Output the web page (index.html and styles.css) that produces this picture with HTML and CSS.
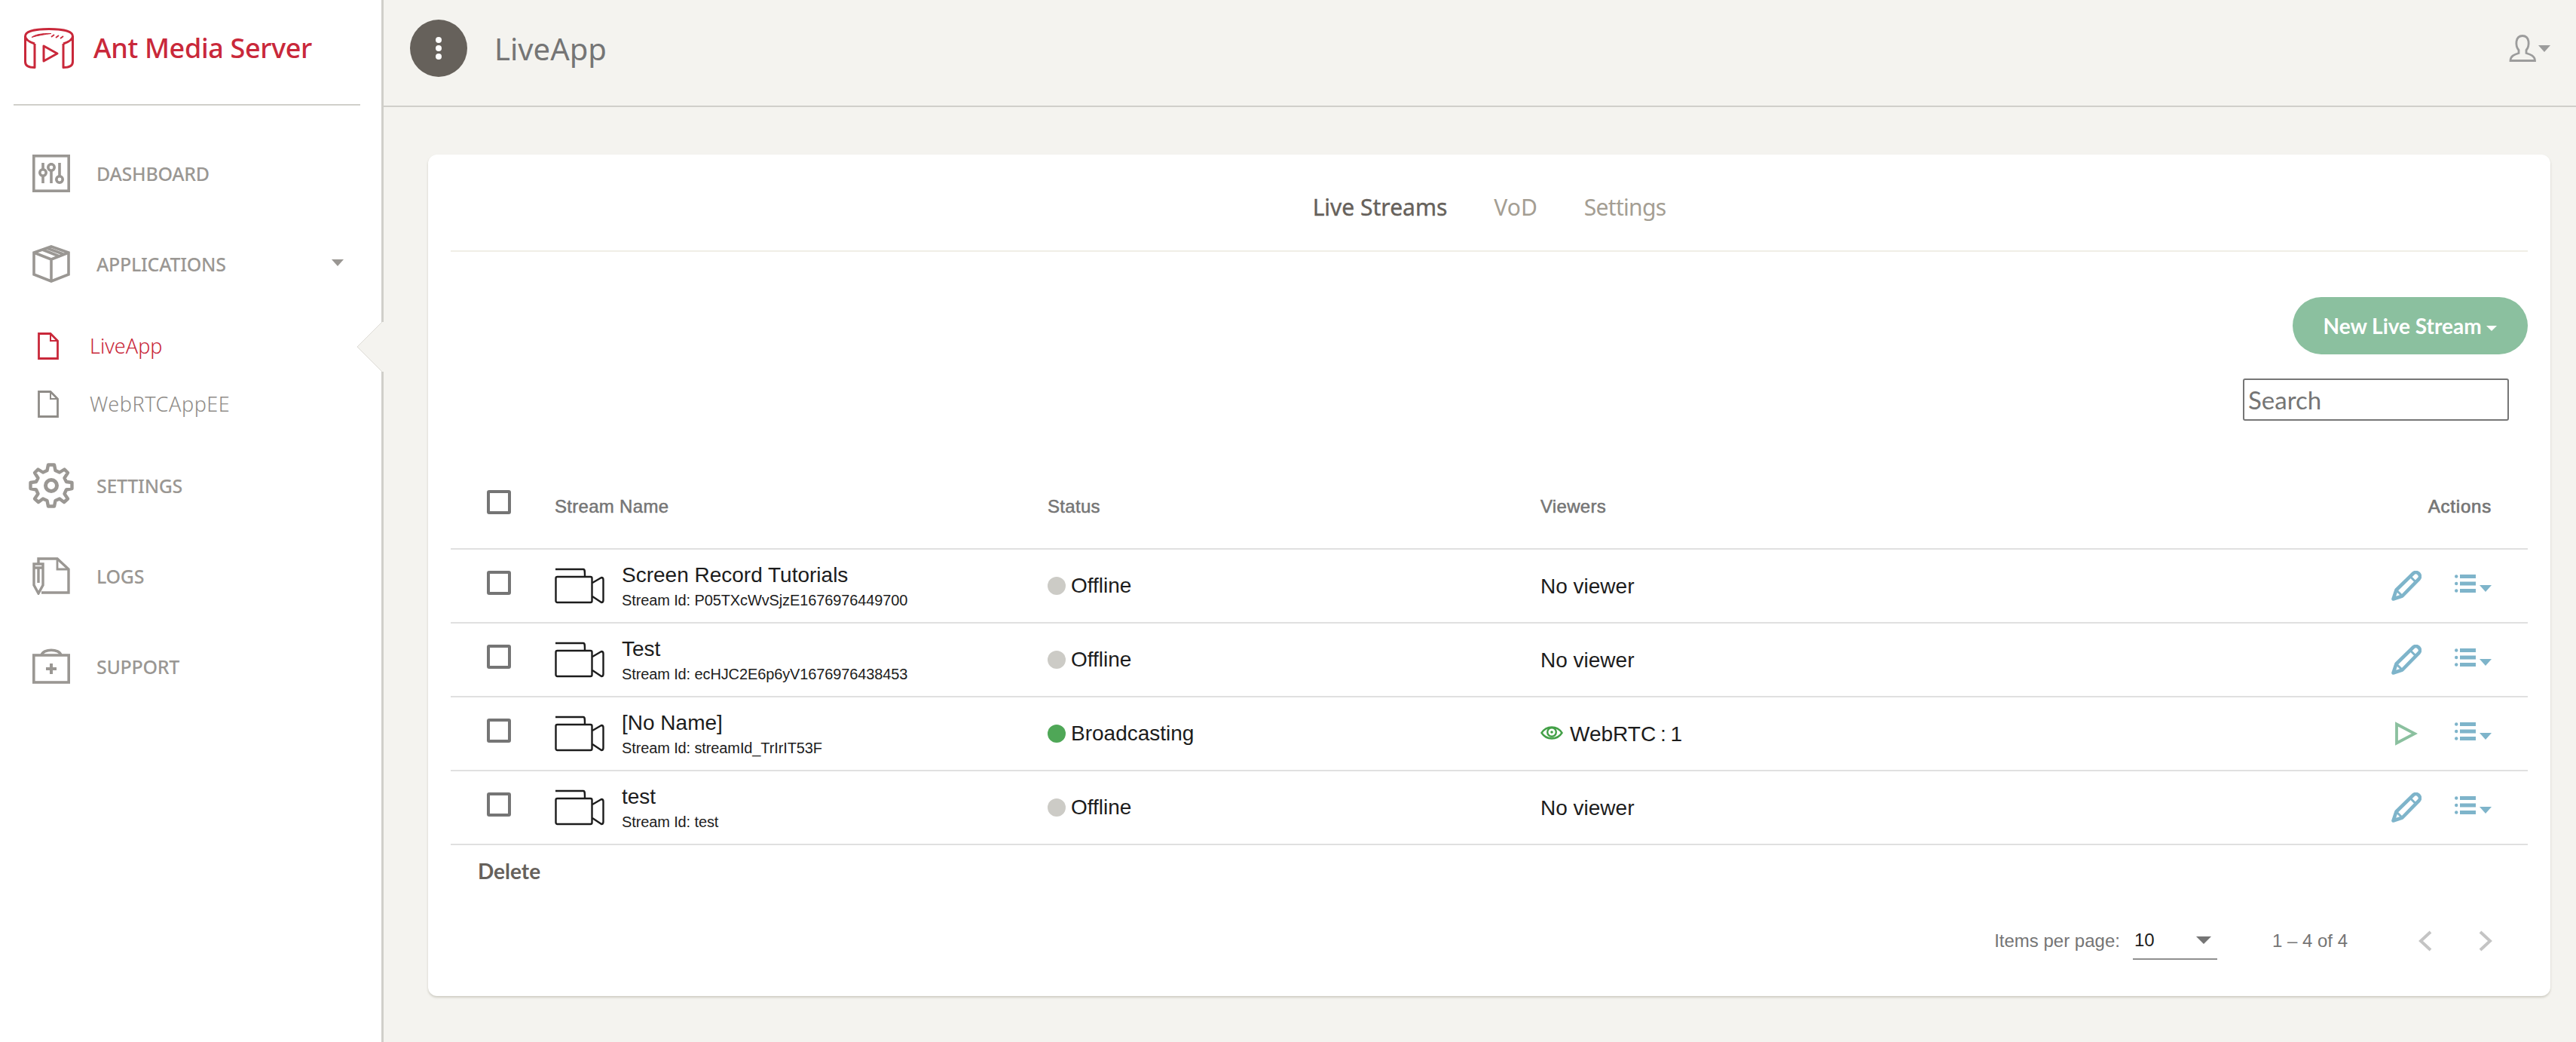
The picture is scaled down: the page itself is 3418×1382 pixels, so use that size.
FILE: index.html
```html
<!DOCTYPE html>
<html lang="en">
<head>
    <meta charset="UTF-8">
    <title>Ant Media Server</title>
    <link rel="stylesheet" href="styles.css">
</head>
<body>
    <div class="app">
        <aside class="sidebar">
            <div class="brand">
                <svg class="brand-logo" viewBox="0 0 66 54" fill="none" stroke="#c9283a" stroke-width="3" stroke-linejoin="round">
                    <path d="M14 21V52.500C6 52.500 1.500 50 1.500 45V11C1.500 4 16 1.500 33 1.500S64.500 4 64.500 11V45C64.500 50 60 52.500 52 52.500V21"/>
                    <path d="M1.500 11C1.500 16 8 19 14 21M64.500 11C64.500 16 58 19 52 21"/>
                    <path d="M10 12.500C14 9 24 7 36 7.500C28 8.500 18 10 10 12.500Z" fill="#c9283a" stroke-width="1"/>
                    <path d="M36 12l4-3M42 13l4-3M48 14l4-3" stroke-width="1.800"/>
                    <path d="M26 24V44L44 34Z"/>
                </svg>
                <span class="brand-name">Ant Media Server</span>
            </div>
            <nav class="nav">
                <a class="nav-item">
                    <svg class="nav-icon" viewBox="0 0 50 50" fill="none" stroke="#9a9793" stroke-width="3.600">
                        <rect x="1.800" y="1.800" width="46.400" height="46.400"/>
                        <path d="M14 11V38M25 11V38M36 11V34"/>
                        <circle cx="14" cy="24" r="4.200" fill="#fff"/>
                        <circle cx="25" cy="17" r="4.200" fill="#fff"/>
                        <circle cx="36" cy="33" r="4.200" fill="#fff"/>
                    </svg>
                    <span>DASHBOARD</span>
                </a>
                <a class="nav-item">
                    <svg class="nav-icon" viewBox="0 0 50 50" fill="none" stroke="#9a9793" stroke-width="3.600">
                        <path d="M25 2L48 10V39L25 48L2 39V10Z"/>
                        <path d="M2 10L25 19L48 10M25 19V48"/>
                        <path d="M13 6L36 15M19 4L41 12"/>
                    </svg>
                    <span>APPLICATIONS</span>
                    <i class="caret nav-caret"></i>
                </a>
                <div class="subnav">
                    <a class="sub-item active">
                        <svg class="sub-icon" viewBox="0 0 28 36" fill="none" stroke="currentColor" stroke-width="2.800">
                            <path d="M1.500 1.500H17L26.500 11V34.500H1.500Z"/>
                            <path d="M17 1.500V11H26.500" stroke-width="2"/>
                        </svg>
                        <span>LiveApp</span>
                    </a>
                    <a class="sub-item">
                        <svg class="sub-icon" viewBox="0 0 28 36" fill="none" stroke="currentColor" stroke-width="2.800">
                            <path d="M1.500 1.500H17L26.500 11V34.500H1.500Z"/>
                            <path d="M17 1.500V11H26.500" stroke-width="2"/>
                        </svg>
                        <span>WebRTCAppEE</span>
                    </a>
                </div>
                <a class="nav-item">
                    <svg class="nav-icon gear" viewBox="0 0 60 60" fill="none" stroke="#9a9793" stroke-width="4.400">
                        <path d="M26 2.500H34L35.500 10L41 12.500L47.500 8.500L52 13L47.500 20L50 25L57.500 26V34L50 35.500L47.500 41L52 47.500L47 52L41 47.500L35.500 50L34 57.500H26L24.500 50L19 47.500L13 52L8 47.500L12.500 41L10 35.500L2.500 34V26L10 25L12.500 20L8 13L12.500 8.500L19 12.500L24.500 10Z" stroke-linejoin="round"/>
                        <circle cx="30" cy="30" r="7.500" stroke-width="5"/>
                    </svg>
                    <span>SETTINGS</span>
                </a>
                <a class="nav-item">
                    <svg class="nav-icon" viewBox="0 0 50 50" fill="none" stroke="#9a9793" stroke-width="3.400">
                        <path d="M8 8V2H33L48 16V47H12"/>
                        <path d="M33 2V16H48" stroke-width="2.800"/>
                        <path d="M2 9H14V37L8 48L2 37Z"/>
                        <path d="M8 14V34M2 14H14"/>
                    </svg>
                    <span>LOGS</span>
                </a>
                <a class="nav-item">
                    <svg class="nav-icon" viewBox="0 0 50 50" fill="none" stroke="#9a9793" stroke-width="3.600">
                        <rect x="1.800" y="10" width="46.400" height="36"/>
                        <path d="M12 10C14 1 36 1 38 10"/>
                        <path d="M25 21V35M18 28H32" stroke-width="4"/>
                    </svg>
                    <span>SUPPORT</span>
                </a>
            </nav>
            <svg class="notch" viewBox="0 0 37 66">
                <path d="M34 0L1 33L34 66H37V0Z" fill="#f4f3ef"/>
                <path d="M34 0L1 33L34 66" fill="none" stroke="#dddbd6" stroke-width="1"/>
            </svg>
        </aside>

        <main class="main">
            <header class="topbar">
                <button class="menu-btn"><i></i><i></i><i></i></button>
                <span class="page-title">LiveApp</span>
                <div class="user-menu">
                    <svg width="36" height="36" viewBox="0 0 36 36" fill="none" stroke="#9c9c9c" stroke-width="2.800">
                        <path d="M2 34.500H34.500C34.500 28 28 26 23 24.500V20.500C26 17 26.500 13 26 9C25 3 21 1.500 18 1.500S11 3 10 9C9.500 13 10 17 13 20.500V24.500C8 26 2 28 2 34.500Z"/>
                    </svg>
                    <i class="caret"></i>
                </div>
            </header>

            <section class="card">
                <div class="tabs">
                    <a class="tab active">Live Streams</a>
                    <a class="tab">VoD</a>
                    <a class="tab">Settings</a>
                </div>
                <div class="toolbar">
                    <button class="new-btn">New Live Stream <i class="caret"></i></button>
                    <input class="search" type="text" placeholder="Search">
                </div>
                <table class="streams">
                    <thead>
                        <tr>
                            <th class="col-check"><span class="check"></span></th>
                            <th class="col-name">Stream Name</th>
                            <th class="col-status">Status</th>
                            <th>Viewers</th>
                            <th class="col-actions">Actions</th>
                        </tr>
                    </thead>
                    <tbody id="rows"></tbody>
                </table>
                <div class="delete-row"><a class="delete">Delete</a></div>
                <div class="paginator">
                    <span class="per-page">Items per page:</span>
                    <div class="select"><span>10</span><i class="select-arrow"></i></div>
                    <span class="range">1 – 4 of 4</span>
                    <svg class="chevron" width="18" height="28" viewBox="0 0 18 28" fill="none" stroke="#c4c4c4" stroke-width="4"><path d="M16 2L3 14L16 26"/></svg>
                    <svg class="chevron next" width="18" height="28" viewBox="0 0 18 28" fill="none" stroke="#c4c4c4" stroke-width="4"><path d="M2 2L15 14L2 26"/></svg>
                </div>
            </section>
        </main>
    </div>

    <script>
        const streams = [
            { name: 'Screen Record Tutorials', id: 'P05TXcWvSjzE1676976449700', live: false },
            { name: 'Test', id: 'ecHJC2E6p6yV1676976438453', live: false },
            { name: '[No Name]', id: 'streamId_TrIrIT53F', live: true },
            { name: 'test', id: 'test', live: false }
        ];

        const camera = `<svg class="cam" width="66" height="48" viewBox="0 0 66 48" fill="none" stroke="#1c1c1c" stroke-width="2.400" stroke-linejoin="round">
            <path d="M1 2H38C40 2 40 4 40 12"/>
            <rect x="1.500" y="12" width="48" height="34" rx="2"/>
            <path d="M50 20L62 13C64 13 64.500 14 64.500 16V43C64.500 45 64 46 62 46L50 38"/>
        </svg>`;
        const pencil = `<svg width="40" height="40" viewBox="0 0 40 40" fill="none" stroke="#7eb4ca" stroke-width="4.600" stroke-linejoin="round">
            <path d="M2.500 37.500L6.500 25.500L29 3.500C31 1.500 34 1.500 36 3.500L36.500 4C38.500 6 38.500 9 36.500 11L14.500 33.500Z"/>
            <path d="M6.500 25.500L14.500 33.500M26 8.500L31.500 14" stroke-width="3"/>
            <path d="M1 39L3.500 31L9 36.500Z" fill="#7eb4ca" stroke="none"/>
        </svg>`;
        const play = `<svg width="30" height="32" viewBox="0 0 30 32" fill="none" stroke="#8bc09f" stroke-width="3.800"><path d="M2 3.500V28.500L26 16Z"/></svg>`;
        const list = `<span class="list-menu"><svg width="28" height="24" viewBox="0 0 28 24" fill="#7eb4ca">
            <circle cx="2.200" cy="2.500" r="2.200"/><circle cx="2.200" cy="12" r="2.200"/><circle cx="2.200" cy="21.500" r="2.200"/>
            <rect x="7" y="0" width="21" height="5"/><rect x="7" y="9.500" width="21" height="5"/><rect x="7" y="19" width="21" height="5"/>
        </svg><i class="caret"></i></span>`;
        const eye = `<svg class="eye" width="30" height="22" viewBox="0 0 30 22" fill="none" stroke="#43a047" stroke-width="2.400">
            <path d="M1.500 11C8 1 22 1 28.500 11C22 21 8 21 1.500 11Z"/><circle cx="15" cy="10" r="5.800"/><circle cx="15" cy="10" r="1.800" fill="#43a047" stroke="none"/>
        </svg>`;

        document.getElementById('rows').innerHTML = streams.map(s => `
            <tr>
                <td class="col-check"><span class="check"></span></td>
                <td class="col-name">
                    <div class="name-cell">${camera}
                        <div>
                            <div class="stream-name">${s.name}</div>
                            <div class="stream-id">Stream Id: ${s.id}</div>
                        </div>
                    </div>
                </td>
                <td class="col-status"><span class="status"><i class="dot ${s.live ? 'live' : ''}"></i>${s.live ? 'Broadcasting' : 'Offline'}</span></td>
                <td class="col-viewers">${s.live ? `<span class="viewers">${eye}WebRTC : 1</span>` : 'No viewer'}</td>
                <td class="col-actions"><div class="actions"><span class="action-main">${s.live ? play : pencil}</span>${list}</div></td>
            </tr>`).join('');
    </script>
</body>
</html>
```

FILE: styles.css
```css
* {
    margin: 0;
    padding: 0;
    box-sizing: border-box;
}
body {
    background: #f4f3ef;
    font-family: 'Liberation Sans', Arial, sans-serif;
    color: #1c1c1c;
    height: 100vh;
    overflow: hidden;
}
.app {
    display: flex;
    height: 1382px;
}
.caret {
    display: inline-block;
    width: 0;
    height: 0;
    border-left: 8px solid transparent;
    border-right: 8px solid transparent;
    border-top: 9px solid #9c9c9c;
}

/* sidebar */
.sidebar {
    width: 509px;
    flex-shrink: 0;
    background: #fff;
    border-right: 3px solid #d0cfca;
    position: relative;
}
.brand {
    margin: 0 28px 0 18px;
    height: 140px;
    border-bottom: 2px solid #d0cfca;
    display: flex;
    align-items: center;
    padding: 0 0 11px 14px;
    gap: 26px;
}
.brand-logo {
    width: 66px;
    height: 54px;
}
.brand-name {
    font-family: 'Noto Sans', sans-serif;
    font-size: 36px;
    font-weight: 500;
    color: #c9283a;
    letter-spacing: -0.35px;
}
.nav {
    padding-top: 30px;
    font-family: 'Noto Sans', sans-serif;
    color: #9a9793;
}
.nav-item {
    display: flex;
    align-items: center;
    height: 120px;
    padding-left: 43px;
    font-size: 25px;
    font-weight: 500;
    letter-spacing: -0.3px;
    position: relative;
}
.nav-icon {
    width: 50px;
    height: 50px;
    margin-right: 35px;
    flex-shrink: 0;
}
.nav-icon.gear {
    width: 60px;
    height: 60px;
    margin-left: -5px;
    margin-right: 30px;
}
.nav-caret {
    position: absolute;
    left: 440px;
    top: 54px;
    border-top-color: #9a9793;
}
.subnav {
    margin-top: 10px;
    margin-bottom: 10px;
}
.sub-item {
    display: flex;
    align-items: center;
    height: 77px;
    padding-left: 50px;
    font-size: 27px;
    font-weight: 300;
    letter-spacing: 0.55px;
    color: #8f8c88;
}
.sub-item.active {
    color: #c9283a;
    letter-spacing: 0;
}
.sub-icon {
    width: 28px;
    height: 36px;
    margin-right: 41px;
}
.notch {
    position: absolute;
    left: 473px;
    top: 427px;
    width: 37px;
    height: 66px;
}

/* main */
.main {
    flex: 1;
    min-width: 0;
}
.topbar {
    height: 142px;
    border-bottom: 2px solid #d0cfca;
    display: flex;
    align-items: center;
    padding: 0 34px 12px 35px;
}
.menu-btn {
    width: 76px;
    height: 76px;
    border-radius: 50%;
    border: none;
    background: #66615b;
    display: flex;
    flex-direction: column;
    align-items: center;
    justify-content: center;
    gap: 3px;
}
.menu-btn i {
    width: 8px;
    height: 8px;
    border-radius: 50%;
    background: #fff;
}
.page-title {
    margin-left: 36px;
    font-family: 'Noto Sans', sans-serif;
    font-size: 40px;
    color: #757575;
}
.user-menu {
    margin-left: auto;
    display: flex;
    align-items: center;
    gap: 3px;
}
.card {
    margin: 63px 34px 0 59px;
    height: 1116px;
    background: #fff;
    border-radius: 12px;
    box-shadow: 0 2px 3px rgba(120, 115, 95, 0.3);
    padding: 0 30px;
}
.tabs {
    height: 129px;
    border-bottom: 2px solid #f0eee6;
    display: flex;
    justify-content: center;
    align-items: center;
    gap: 62px;
    padding-top: 12px;
    font-family: 'Noto Sans', sans-serif;
    font-size: 30px;
}
.tab {
    color: #a49e93;
}
.tab:last-child {
    letter-spacing: -0.7px;
}
.tab.active {
    color: #66615b;
    -webkit-text-stroke: 0.4px #66615b;
}
.toolbar {
    display: flex;
    flex-direction: column;
    align-items: flex-end;
    padding-top: 60px;
}
.new-btn {
    width: 312px;
    height: 76px;
    border: none;
    border-radius: 38px;
    background: #8bc09f;
    color: #fff;
    font-family: Lato, sans-serif;
    font-size: 28px;
    font-weight: 700;
}
.new-btn .caret {
    border-top-color: #fff;
    border-left-width: 7px;
    border-right-width: 7px;
    border-top-width: 7px;
    vertical-align: middle;
}
.search {
    width: 353px;
    height: 56px;
    margin-top: 32px;
    margin-right: 25px;
    padding: 0 5px;
    border: 2px solid #767676;
    border-radius: 3px;
    font-family: Lato, sans-serif;
    font-size: 33px;
    outline: none;
}
.search::placeholder {
    color: #757575;
}

/* table */
.streams {
    width: 100%;
    border-collapse: collapse;
    table-layout: fixed;
    margin-top: 26px;
}
.streams th {
    height: 144px;
    padding-top: 32px;
    text-align: left;
    font-size: 24px;
    font-weight: 400;
    letter-spacing: 0.3px;
    color: #757575;
    -webkit-text-stroke: 0.5px #757575;
    border-bottom: 2px solid #e0e0e0;
}
.streams td {
    height: 98px;
    font-size: 28px;
    border-bottom: 2px solid #e0e0e0;
}
.streams td.col-status, .streams td.col-viewers {
    padding-top: 2px;
}
.col-check {
    width: 138px;
    padding-left: 48px;
}
.col-name {
    width: 654px;
}
.col-status {
    width: 654px;
}
.streams .col-actions {
    width: 400px;
    text-align: right;
    padding-right: 48px;
}
.streams th.col-actions {
    letter-spacing: 0.8px;
    -webkit-text-stroke: 0.7px #757575;
}
.check {
    display: block;
    width: 32px;
    height: 32px;
    border: 4px solid #757575;
    border-radius: 3px;
    margin-top: -8px;
}
th .check {
    margin-top: -12px;
}
.name-cell {
    display: flex;
    align-items: center;
    gap: 23px;
}
.cam {
    flex-shrink: 0;
}
.stream-name {
    font-size: 28px;
    line-height: 34px;
}
.stream-id {
    font-size: 20px;
    line-height: 26px;
    margin-top: 3px;
    letter-spacing: -0.12px;
}
.status, .viewers {
    display: inline-flex;
    align-items: center;
}
.viewers {
    word-spacing: -2px;
}
.dot {
    width: 24px;
    height: 24px;
    border-radius: 50%;
    background: #cccbc6;
    margin-right: 7px;
}
.dot.live {
    background: #4fa757;
}
.eye {
    margin-right: 9px;
    margin-top: -3px;
}
.actions {
    display: flex;
    justify-content: flex-end;
    align-items: center;
}
.action-main {
    display: flex;
    justify-content: center;
    width: 40px;
    margin-right: 44px;
}
.list-menu {
    display: flex;
    align-items: flex-end;
    gap: 5px;
    margin-top: -6px;
}
.list-menu .caret {
    border-top-color: #7eb4ca;
    margin-bottom: 1px;
}

.delete-row {
    padding: 17px 0 0 36px;
}
.delete {
    font-family: Lato, sans-serif;
    font-size: 28px;
    font-weight: 700;
    color: #66615b;
}
.paginator {
    display: flex;
    align-items: center;
    justify-content: flex-end;
    margin-top: 51px;
    padding-right: 47px;
    font-size: 24px;
    color: #757575;
}
.select {
    width: 112px;
    height: 50px;
    margin-left: 17px;
    margin-right: 73px;
    border-bottom: 2px solid #8f8f8f;
    display: flex;
    align-items: center;
    justify-content: space-between;
    padding: 0 8px 0 2px;
    color: #1c1c1c;
}
.select-arrow {
    width: 0;
    height: 0;
    border-left: 10px solid transparent;
    border-right: 10px solid transparent;
    border-top: 10px solid #757575;
}
.chevron {
    margin-left: 94px;
}
.chevron.next {
    margin-left: 62px;
}
```
